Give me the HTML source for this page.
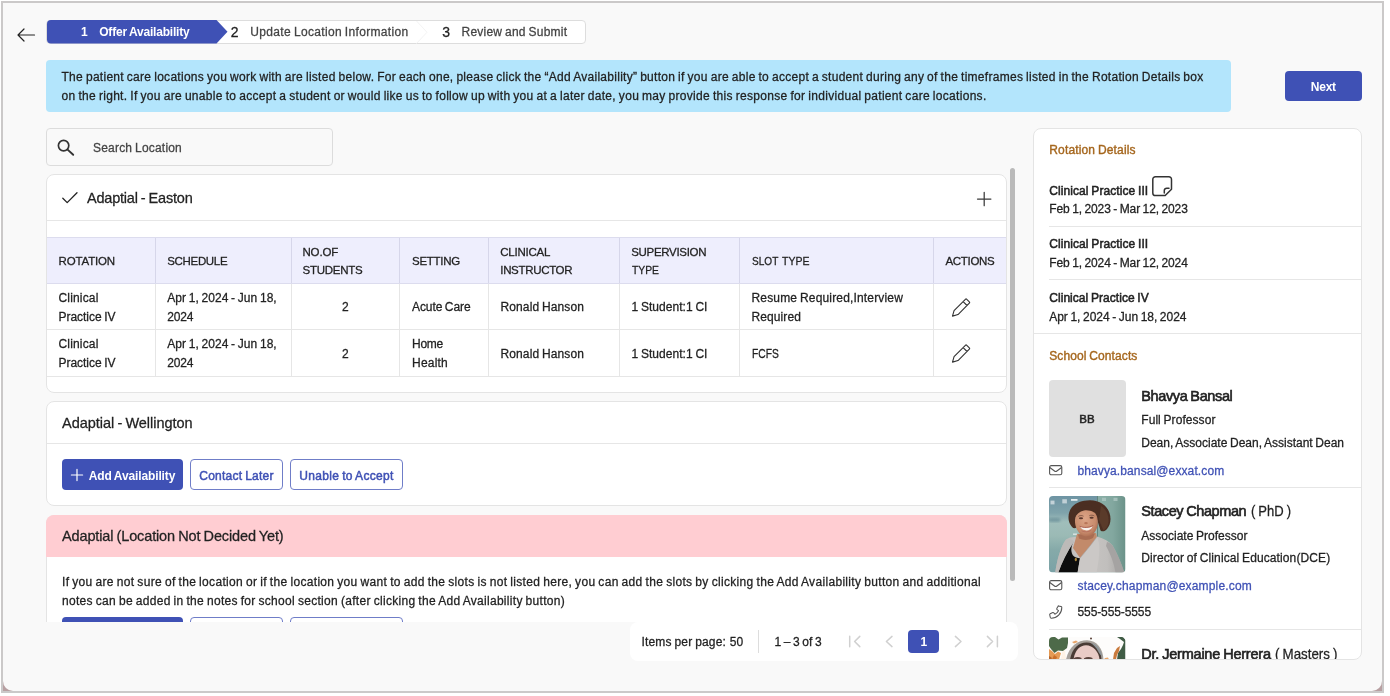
<!DOCTYPE html>
<html lang="en">
<head>
<meta charset="utf-8">
<title>Offer Availability</title>
<style>
html,body{margin:0;padding:0;background:#fff;}
body{width:1390px;height:696px;overflow:hidden;position:relative;font-family:"Liberation Sans",sans-serif;}
#frame{position:absolute;left:1px;top:1px;width:1383px;height:691.5px;box-sizing:border-box;background:#cbc9c9;}
#inner{position:absolute;left:3px;top:3px;width:1379px;height:687.5px;background:#f9f9f9;border-radius:0 0 10px 10px;}
#corner{position:absolute;left:3px;top:670px;width:1379px;height:20.5px;background:#b8a0a2;}
#page{position:absolute;left:0;top:0;width:1390px;height:696px;overflow:hidden;will-change:transform;}
.abs{position:absolute;box-sizing:border-box;}
.t{position:absolute;white-space:nowrap;line-height:normal;word-spacing:-0.7px;}
.t span{display:inline-block;white-space:pre;}
.card{position:absolute;box-sizing:border-box;background:#fff;border:1px solid #e4e4e4;border-radius:8px;}
.hl{position:absolute;height:1px;background:#e6e6e6;}
.vl{position:absolute;width:1px;background:#e6e6e6;}
.btn{position:absolute;box-sizing:border-box;border-radius:4px;}
.btn.p{background:#3f51b5;}
.btn.o{background:#fff;border:1px solid #6f7dc8;}
svg{position:absolute;overflow:visible;}
</style>
</head>
<body>
<div id="frame"></div><div id="corner"></div><div id="inner"></div>
<div id="page">
<svg style="left:17px;top:27.5px" width="18" height="14" viewBox="0 0 18 14"><path d="M17.5 7H1.2M7 1L1 7l6 6" fill="none" stroke="#222" stroke-width="1.2" stroke-linecap="round" stroke-linejoin="round"/></svg><div class="abs" style="left:46px;top:19.5px;width:540px;height:24.5px;background:#fff;border:1px solid #ddd;border-radius:4px;"></div><svg style="left:46.5px;top:20px" width="181" height="23.5" viewBox="0 0 181 23.5"><path d="M4 0H169.5L180.5 11.75L169.5 23.5H4A4 4 0 0 1 0 19.5V4A4 4 0 0 1 4 0Z" fill="#3f51b5"/></svg><svg style="left:416px;top:20.5px" width="12" height="22.5" viewBox="0 0 12 22.5"><path d="M0.5 0L11 11.25L0.5 22.5" fill="none" stroke="#f4f4f4" stroke-width="1"/></svg><div class="abs" style="left:46px;top:60px;width:1184.5px;height:52px;background:#b3e5fc;border-radius:4px;"></div><div class="btn p" style="left:1285px;top:71px;width:77px;height:30px;"></div><div class="abs" style="left:46px;top:128px;width:287px;height:37.5px;background:#f9f9f9;border:1px solid #dcdcdc;border-radius:4px;"></div><svg style="left:56.7px;top:139px" width="18" height="17" viewBox="0 0 18 17"><circle cx="6.6" cy="6.6" r="5.2" fill="none" stroke="#333" stroke-width="1.7"/><path d="M10.6 10.6L16.2 15.8" stroke="#333" stroke-width="1.9" stroke-linecap="round"/></svg><div class="card" style="left:46px;top:174px;width:961px;height:219px;"></div><svg style="left:62px;top:192px" width="16" height="12" viewBox="0 0 16 12"><path d="M0.8 6.2L5.2 10.6L15 0.8" fill="none" stroke="#222" stroke-width="1.3" stroke-linecap="round" stroke-linejoin="round"/></svg><svg style="left:976.5px;top:191.5px" width="14" height="14" viewBox="0 0 14 14"><path d="M7.2 0.3V13.7M0.5 7H13.9" stroke="#3a3a3a" stroke-width="1.25" stroke-linecap="round"/></svg><div class="hl" style="left:47px;top:220px;width:959px;"></div><div class="abs" style="left:47px;top:237px;width:959px;height:47px;background:#eeeefd;border-top:1px solid #dcdcee;border-bottom:1px solid #dcdcee;"></div><div class="vl" style="left:154.75px;top:238px;width:1px;height:45px;background:#d6d6ea;"></div><div class="vl" style="left:154.75px;top:284px;width:1px;height:92px;"></div><div class="vl" style="left:290.5px;top:238px;width:1px;height:45px;background:#d6d6ea;"></div><div class="vl" style="left:290.5px;top:284px;width:1px;height:92px;"></div><div class="vl" style="left:399.0px;top:238px;width:1px;height:45px;background:#d6d6ea;"></div><div class="vl" style="left:399.0px;top:284px;width:1px;height:92px;"></div><div class="vl" style="left:487.75px;top:238px;width:1px;height:45px;background:#d6d6ea;"></div><div class="vl" style="left:487.75px;top:284px;width:1px;height:92px;"></div><div class="vl" style="left:618.5px;top:238px;width:1px;height:45px;background:#d6d6ea;"></div><div class="vl" style="left:618.5px;top:284px;width:1px;height:92px;"></div><div class="vl" style="left:738.75px;top:238px;width:1px;height:45px;background:#d6d6ea;"></div><div class="vl" style="left:738.75px;top:284px;width:1px;height:92px;"></div><div class="vl" style="left:932.75px;top:238px;width:1px;height:45px;background:#d6d6ea;"></div><div class="vl" style="left:932.75px;top:284px;width:1px;height:92px;"></div><div class="hl" style="left:47px;top:329px;width:959px;"></div><div class="hl" style="left:47px;top:376px;width:959px;"></div><svg style="left:952.2px;top:298.8px" width="18" height="18" viewBox="0 0 18 18"><path d="M0.5 17.1L2.06 11.58L13.37 0.27Q14.08 -0.44 14.79 0.27L17.33 2.81Q18.04 3.52 17.33 4.23L6.02 15.54ZM11.11 2.53L15.07 6.49" fill="none" stroke="#333" stroke-width="1.1" stroke-linejoin="round"/></svg><svg style="left:952.2px;top:345.3px" width="18" height="18" viewBox="0 0 18 18"><path d="M0.5 17.1L2.06 11.58L13.37 0.27Q14.08 -0.44 14.79 0.27L17.33 2.81Q18.04 3.52 17.33 4.23L6.02 15.54ZM11.11 2.53L15.07 6.49" fill="none" stroke="#333" stroke-width="1.1" stroke-linejoin="round"/></svg><div class="abs" style="left:1010px;top:168px;width:5px;height:413px;background:#bababa;border-radius:2.5px;"></div><div class="card" style="left:46px;top:401px;width:961px;height:105px;"></div><div class="hl" style="left:47px;top:443px;width:959px;"></div><div class="btn p" style="left:62px;top:459px;width:121px;height:31px;"></div><div class="btn o" style="left:190px;top:459px;width:93px;height:31px;"></div><div class="btn o" style="left:290px;top:459px;width:113px;height:31px;"></div><svg style="left:71.3px;top:469.2px" width="12" height="12" viewBox="0 0 12 12"><path d="M6 0.4V11.6M0.4 6H11.6" stroke="#fff" stroke-width="1.2" stroke-linecap="round"/></svg><div class="abs" style="left:46px;top:515px;width:961px;height:107px;overflow:hidden;"><div class="card" style="left:0;top:0;width:961px;height:160px;"></div><div class="abs" style="left:0;top:0;width:961px;height:41.5px;background:#ffcdd2;border-radius:8px 8px 0 0;"></div><div class="btn p" style="left:16px;top:102px;width:121px;height:31px;"></div><div class="btn o" style="left:144px;top:102px;width:93px;height:31px;"></div><div class="btn o" style="left:244px;top:102px;width:113px;height:31px;"></div></div><div class="abs" style="left:630px;top:622px;width:387.5px;height:38.5px;background:#fff;border-radius:8px;"></div><div class="vl" style="left:758px;top:630px;height:22.5px;background:#ddd;"></div><div class="btn p" style="left:908.3px;top:630px;width:30.4px;height:23px;border-radius:4px;"></div><svg style="left:848px;top:635px" width="14" height="13" viewBox="0 0 14 13"><path d="M1.7 1.2V11.8M11.8 1.4L6.6 6.5L11.8 11.6" fill="none" stroke="#d0d0d0" stroke-width="1.5" stroke-linecap="round" stroke-linejoin="round"/></svg><svg style="left:884px;top:635px" width="10" height="13" viewBox="0 0 10 13"><path d="M8 1.4L2.4 6.5L8 11.6" fill="none" stroke="#d0d0d0" stroke-width="1.5" stroke-linecap="round" stroke-linejoin="round"/></svg><svg style="left:953px;top:635px" width="10" height="13" viewBox="0 0 10 13"><path d="M2.4 1.4L8 6.5L2.4 11.6" fill="none" stroke="#d0d0d0" stroke-width="1.5" stroke-linecap="round" stroke-linejoin="round"/></svg><svg style="left:985px;top:635px" width="14" height="13" viewBox="0 0 14 13"><path d="M12.4 1.2V11.8M2.4 1.4L7.6 6.5L2.4 11.6" fill="none" stroke="#d0d0d0" stroke-width="1.5" stroke-linecap="round" stroke-linejoin="round"/></svg><div class="card" style="left:1033px;top:128px;width:328.5px;height:532px;"></div><svg style="left:1151.5px;top:175.9px" width="20.3" height="20.3" viewBox="0 0 20.3 20.3"><path d="M3.4 0.8H16.9A2.6 2.6 0 0 1 19.5 3.4V13.2L13.2 19.5H3.4A2.6 2.6 0 0 1 0.8 16.9V3.4A2.6 2.6 0 0 1 3.4 0.8ZM12.3 16.9V14.6A2.4 2.4 0 0 1 14.7 12.2H17" fill="none" stroke="#333" stroke-width="1.5" stroke-linejoin="round" stroke-linecap="round"/></svg><div class="hl" style="left:1049px;top:226px;width:312px;"></div><div class="hl" style="left:1049px;top:279px;width:312px;"></div><div class="hl" style="left:1034px;top:333px;width:327px;"></div><div class="abs" style="left:1049px;top:380px;width:76.5px;height:76.5px;background:#e0e0e0;border-radius:4px;"></div><svg style="left:1049.1px;top:464.7px" width="13.4" height="10.4" viewBox="0 0 13.4 10.4"><rect x="0.6" y="0.6" width="12.2" height="9.2" rx="1.6" fill="none" stroke="#555" stroke-width="1.1"/><path d="M0.8 2.5L5.5 6a2 2 0 0 0 2.4 0L12.6 2.5" fill="none" stroke="#555" stroke-width="1.1"/></svg><div class="hl" style="left:1049px;top:486.5px;width:312px;"></div><svg style="left:1049px;top:495.5px" width="76.5" height="76.5" viewBox="0 0 76.5 76.5">
<defs>
<clipPath id="cp2"><rect x="0" y="0" width="76.5" height="76.5" rx="4"/></clipPath>
<linearGradient id="bgL" x1="0" y1="0" x2="0" y2="1"><stop offset="0" stop-color="#6e94a3"/><stop offset="0.22" stop-color="#7fa3ab"/><stop offset="0.34" stop-color="#a0bebb"/><stop offset="0.52" stop-color="#9bbab5"/><stop offset="0.7" stop-color="#86aaa9"/><stop offset="1" stop-color="#7aa2a6"/></linearGradient>
<linearGradient id="bgR" x1="0" y1="0" x2="1" y2="0"><stop offset="0" stop-color="#8bafa7"/><stop offset="0.55" stop-color="#82a79f"/><stop offset="1" stop-color="#6b9289"/></linearGradient>
<linearGradient id="jk" x1="0" y1="0" x2="1" y2="0"><stop offset="0" stop-color="#b3b1af"/><stop offset="0.35" stop-color="#c9c6c4"/><stop offset="0.75" stop-color="#c1bfbd"/><stop offset="1" stop-color="#a3a1a0"/></linearGradient>
<radialGradient id="fc" cx="0.45" cy="0.4" r="0.65"><stop offset="0" stop-color="#dca487"/><stop offset="0.7" stop-color="#c88c6d"/><stop offset="1" stop-color="#a9694e"/></radialGradient>
<filter id="bl2" x="-10%" y="-10%" width="120%" height="120%"><feGaussianBlur stdDeviation="0.75"/></filter>
<filter id="bl2b" x="-20%" y="-20%" width="140%" height="140%"><feGaussianBlur stdDeviation="1.6"/></filter>
</defs>
<g clip-path="url(#cp2)">
<rect width="48.5" height="76.5" fill="url(#bgL)"/>
<rect x="48.5" width="28" height="76.5" fill="url(#bgR)"/>
<rect x="0" y="22.5" width="11" height="3" fill="#5c8490" opacity="0.8" filter="url(#bl2b)"/>
<rect x="48.1" y="0" width="0.8" height="42" fill="#527870"/>
<g filter="url(#bl2)">
<rect x="1.5" y="4.6" width="4" height="3.8" fill="#c3d2d8"/><rect x="13.3" y="3.2" width="4.6" height="4.2" fill="#c0d0d6"/><rect x="22" y="3" width="6.5" height="1.8" fill="#e9eff1"/><rect x="53" y="1.8" width="4" height="3.2" fill="#a5c0bb"/><rect x="64.5" y="1.8" width="4" height="3.2" fill="#a5c0bb"/>
<rect x="24" y="37.5" width="4" height="1.4" fill="#dbe6e6"/>
<!-- jacket -->
<path d="M6.3 76.5C8 64 11.5 51 17 43.5C21 40.5 26 40.5 30 41.5L48 40.5C55 42.5 60.5 45.5 63.6 49.5C68 57 72 66 75.3 76.5Z" fill="url(#jk)"/>
<path d="M57 50C61 57 65 67 66.5 76.5H75.3C72 66 68 57 63.6 49.5C62 47.5 60 46.5 58 46Z" fill="#a5a3a2"/>
<!-- neck / chest -->
<path d="M28 38L47 37L48 41.5L40.5 51L31 62L24 52Z" fill="#c28a6b"/>
<path d="M29 38.5L46 37.5L44 42C40 44.5 34 44.5 30 42.5Z" fill="#a96d52"/>
<!-- black top -->
<path d="M25 45.3C22 50 21.5 55 23.8 59.2C26 61.5 28.5 62 31 62.2L28.6 76.5H9.3C13 66 18 56 25 45.3Z" fill="#111"/>
<!-- right lapel -->
<path d="M31 62.2L41 50L48 40.8C51.5 47 51 60 47.5 76.5H28.6Z" fill="#cbc8c6"/>
<path d="M31 62.2L41 50L47.5 41.5" fill="none" stroke="#a19f9d" stroke-width="0.6"/>
<path d="M17 43.5C20 43 23 43.6 25 45.3C18 56 13 66 9.3 76.5H6.3C8 64 11.5 51 17 43.5Z" fill="#bdbab8"/>
<!-- hair -->
<path d="M40.7 4.2C50 4 58 9 60.5 17C62.5 23 61.5 29 58 33C56 35.5 53.5 36 51.5 34.5L47 20L30 18L27.5 31.5C25 33.5 22.5 31 21 28C18.5 23 19 16 23 11C27 6.5 33 4.3 40.7 4.2Z" fill="#4b2f23"/>
<path d="M52 10C57 13 60 19 59.5 26C59 30 57 33 54.5 34.5L50 24Z" fill="#5a3a2b"/>
<!-- face -->
<ellipse cx="37.4" cy="25.8" rx="11.4" ry="14.6" fill="url(#fc)" transform="rotate(-4 37.4 25.8)"/>
<path d="M25.5 22C27 13 33 9 40 9.5C46 10 50 14 50.5 21C47 16.5 41 13.5 35 14.5C30.5 15.5 27.5 18.5 25.5 22Z" fill="#4b2f23"/>
<ellipse cx="32" cy="22.2" rx="2.1" ry="0.95" fill="#5a382d"/><ellipse cx="42.6" cy="21.8" rx="2.1" ry="0.95" fill="#5a382d"/>
<path d="M29.3 20.4C30.8 19.3 33 19.3 34.6 20.2" fill="none" stroke="#5a382d" stroke-width="0.6"/><path d="M40.2 19.8C41.8 18.9 44 19 45.4 20" fill="none" stroke="#5a382d" stroke-width="0.6"/>
<ellipse cx="37" cy="27.2" rx="1.8" ry="1.1" fill="#b87658"/>
<path d="M31.2 30.6C34.5 32.6 40 32.5 43.6 30C42.4 35.6 33.4 36 31.2 30.6Z" fill="#f7f1ee"/>
<path d="M30.6 30.2C34.5 32 40 31.8 44.2 29.5" fill="none" stroke="#a4574b" stroke-width="0.8"/>
<path d="M32.5 34.8C35.5 36.4 39.5 36.2 42.3 34.2" fill="none" stroke="#b0675a" stroke-width="0.7"/>
<ellipse cx="26.8" cy="63.5" rx="1.1" ry="1.7" fill="#b08a3a"/>
</g>
</g></svg><svg style="left:1049.1px;top:580.3px" width="13.4" height="10.4" viewBox="0 0 13.4 10.4"><rect x="0.6" y="0.6" width="12.2" height="9.2" rx="1.6" fill="none" stroke="#555" stroke-width="1.1"/><path d="M0.8 2.5L5.5 6a2 2 0 0 0 2.4 0L12.6 2.5" fill="none" stroke="#555" stroke-width="1.1"/></svg><svg style="left:1049px;top:605px" width="14" height="14" viewBox="0 0 14 14"><path d="M9.2 0.9l2.9 0.7a0.9 0.9 0 0 1 0.7 0.9C12.8 8.6 8 13.2 2.2 13.2a0.9 0.9 0 0 1-0.9-0.7L0.7 9.7a0.9 0.9 0 0 1 0.5-1l2.6-1.1a0.9 0.9 0 0 1 1 0.3l1.1 1.4a8 8 0 0 0 3.6-3.6L8.1 4.6a0.9 0.9 0 0 1-0.3-1L8.9 1.4a0.9 0.9 0 0 1 1-0.5Z" fill="none" stroke="#555" stroke-width="1.05" stroke-linejoin="round"/></svg><div class="hl" style="left:1049px;top:628.5px;width:312px;"></div><svg style="left:1049px;top:637px" width="76.5" height="22.5" viewBox="0 0 76.5 22.5">
<defs>
<clipPath id="cp3"><path d="M4 0H72.5A4 4 0 0 1 76.5 4V22.5H0V4A4 4 0 0 1 4 0Z"/></clipPath>
<filter id="bl3" x="-10%" y="-10%" width="120%" height="120%"><feGaussianBlur stdDeviation="0.55"/></filter>
</defs>
<g clip-path="url(#cp3)">
<rect width="76.5" height="22.5" fill="#fdfcfb"/>
<g filter="url(#bl3)">
<path d="M0 0H6L9.5 2.5L13 0.5H19V6L18 11L14 14L9 13.5L5.5 16L2 12L0 9Z" fill="#4d6a49"/>
<path d="M0 12L3 14L6 17L9 14.5L12 16L10 22.5H0Z" fill="#e49a55"/>
<path d="M3 22.5L5 18L8 20L7 22.5Z" fill="#c96d2b"/><path d="M0 19L2.5 20.5L3 22.5H0Z" fill="#b5642a"/>
<path d="M13 15L16 13L17 22.5H12Z" fill="#fff3e6"/>
<path d="M23 5L27 3.5L29 5L25 6.5Z" fill="#e9a56a"/>
<path d="M68 0H74L76.5 3V22.5H68L69 16L72 12L74 8L75 5L71 2Z" fill="#405c45"/>
<path d="M65 16L68 11L71 9L70 14L68 18L67 22.5H64Z" fill="#c97a3c"/>
<path d="M56 21L59 20.5L60 22.5H55Z" fill="#e9a56a"/>
<circle cx="42" cy="1.6" r="1" fill="#5a4038"/>
<!-- hair & face -->
<path d="M17 22.5C20 9 29 3.2 38 3.2C48 3.2 54 12 54.5 22.5Z" fill="#a8a29c"/>
<path d="M21 22.5C23 11 30 5.5 37.5 5.5C46 5.5 52 13 52.5 22.5Z" fill="#4a3a34"/>
<path d="M24.5 22.5C26 13 31 8.3 37 8.3C44 8.3 50 15 50.5 22.5Z" fill="#e9cbc6"/>
<path d="M42 5.8C48 7 52.5 13 53.5 20L50 16C48 11 45 9 42 5.8Z" fill="#8f969a"/>
<path d="M24.5 21.2C27 19.6 30.5 19.6 32.5 21V22.5H24.5Z" fill="#5a433d"/><path d="M35 21.2C37.5 19.6 41 19.6 43.5 21V22.5H35Z" fill="#5a433d"/>
</g></g></svg>
<div class="t" id="t0" style="top:25.20px;font-size:12px;color:#fff;font-weight:700;letter-spacing:-0.888px;left:80.90px;"><span>1</span></div>
<div class="t" id="t1" style="top:25.20px;font-size:12px;color:#fff;font-weight:700;letter-spacing:-0.193px;left:99.20px;"><span>Offer Availability</span></div>
<div class="t" id="t2" style="top:24.00px;font-size:14px;color:#222;-webkit-text-stroke:0.26px #222;letter-spacing:-0.397px;left:230.80px;"><span>2</span></div>
<div class="t" id="t3" style="top:25.20px;font-size:12px;color:#444;-webkit-text-stroke:0.26px #444;letter-spacing:0.327px;left:250.30px;"><span>Update Location Information</span></div>
<div class="t" id="t4" style="top:24.00px;font-size:14px;color:#222;-webkit-text-stroke:0.26px #222;letter-spacing:-0.797px;left:442.20px;"><span>3</span></div>
<div class="t" id="t5" style="top:25.20px;font-size:12px;color:#444;-webkit-text-stroke:0.26px #444;letter-spacing:0.224px;left:461.50px;"><span>Review and Submit</span></div>
<div class="t" id="t6" style="top:70.40px;font-size:12px;color:#222;-webkit-text-stroke:0.26px #222;letter-spacing:0.280px;left:61.50px;"><span>The patient care locations you work with are listed below. For each one, please click the “Add Availability” button if you are able to accept a student during any of the timeframes listed in the Rotation Details box</span></div>
<div class="t" id="t7" style="top:89.40px;font-size:12px;color:#222;-webkit-text-stroke:0.26px #222;letter-spacing:0.301px;left:61.50px;"><span>on the right. If you are unable to accept a student or would like us to follow up with you at a later date, you may provide this response for individual patient care locations.</span></div>
<div class="t" id="t8" style="top:79.80px;font-size:12px;color:#fff;font-weight:700;letter-spacing:-0.254px;left:1023.30px;width:600px;text-align:center;"><span>Next</span></div>
<div class="t" id="t9" style="top:140.50px;font-size:12px;color:#444;-webkit-text-stroke:0.26px #444;letter-spacing:0.198px;left:93.00px;"><span>Search Location</span></div>
<div class="t" id="t10" style="top:189.80px;font-size:14.5px;color:#222;-webkit-text-stroke:0.26px #222;letter-spacing:-0.208px;left:87.00px;"><span>Adaptial - Easton</span></div>
<div class="t" id="t11" style="top:254.90px;font-size:11.5px;color:#222;-webkit-text-stroke:0.26px #222;letter-spacing:-0.152px;left:58.50px;"><span>ROTATION</span></div>
<div class="t" id="t12" style="top:254.90px;font-size:11.5px;color:#222;-webkit-text-stroke:0.26px #222;letter-spacing:-0.330px;left:167.25px;"><span>SCHEDULE</span></div>
<div class="t" id="t13" style="top:245.60px;font-size:11.5px;color:#222;-webkit-text-stroke:0.26px #222;letter-spacing:-0.184px;left:302.50px;"><span>NO.OF</span></div>
<div class="t" id="t14" style="top:264.40px;font-size:11.5px;color:#222;-webkit-text-stroke:0.26px #222;letter-spacing:-0.248px;left:302.50px;"><span>STUDENTS</span></div>
<div class="t" id="t15" style="top:254.90px;font-size:11.5px;color:#222;-webkit-text-stroke:0.26px #222;letter-spacing:-0.263px;left:412.00px;"><span>SETTING</span></div>
<div class="t" id="t16" style="top:245.60px;font-size:11.5px;color:#222;-webkit-text-stroke:0.26px #222;letter-spacing:-0.223px;left:500.25px;"><span>CLINICAL</span></div>
<div class="t" id="t17" style="top:264.40px;font-size:11.5px;color:#222;-webkit-text-stroke:0.26px #222;letter-spacing:-0.319px;left:500.25px;"><span>INSTRUCTOR</span></div>
<div class="t" id="t18" style="top:245.60px;font-size:11.5px;color:#222;-webkit-text-stroke:0.26px #222;letter-spacing:-0.310px;left:631.25px;"><span>SUPERVISION</span></div>
<div class="t" id="t19" style="top:264.40px;font-size:11.5px;color:#222;-webkit-text-stroke:0.26px #222;left:632.00px;"><span style="transform:scaleX(0.8986);transform-origin:left center;">TYPE</span></div>
<div class="t" id="t20" style="top:254.90px;font-size:11.5px;color:#222;-webkit-text-stroke:0.26px #222;left:751.70px;"><span style="transform:scaleX(0.8753);transform-origin:left center;">SLOT</span></div>
<div class="t" id="t21" style="top:254.90px;font-size:11.5px;color:#222;-webkit-text-stroke:0.26px #222;left:782.30px;"><span style="transform:scaleX(0.9152);transform-origin:left center;">TYPE</span></div>
<div class="t" id="t22" style="top:254.90px;font-size:11.5px;color:#222;-webkit-text-stroke:0.26px #222;letter-spacing:-0.304px;left:945.50px;"><span>ACTIONS</span></div>
<div class="t" id="t23" style="top:291.00px;font-size:12px;color:#222;-webkit-text-stroke:0.26px #222;letter-spacing:0.164px;left:58.50px;"><span>Clinical</span></div>
<div class="t" id="t24" style="top:309.50px;font-size:12px;color:#222;-webkit-text-stroke:0.26px #222;letter-spacing:-0.030px;left:58.50px;"><span>Practice IV</span></div>
<div class="t" id="t25" style="top:291.00px;font-size:12px;color:#222;-webkit-text-stroke:0.26px #222;letter-spacing:0.044px;left:167.25px;"><span>Apr 1, 2024 - Jun 18,</span></div>
<div class="t" id="t26" style="top:309.50px;font-size:12px;color:#222;-webkit-text-stroke:0.26px #222;letter-spacing:-0.176px;left:167.25px;"><span>2024</span></div>
<div class="t" id="t27" style="top:300.20px;font-size:12px;color:#222;-webkit-text-stroke:0.26px #222;letter-spacing:-0.688px;left:45.00px;width:600px;text-align:center;"><span>2</span></div>
<div class="t" id="t28" style="top:300.20px;font-size:12px;color:#222;-webkit-text-stroke:0.26px #222;letter-spacing:-0.084px;left:412.00px;"><span>Acute Care</span></div>
<div class="t" id="t29" style="top:291.00px;font-size:12px;color:#222;-webkit-text-stroke:0.26px #222;letter-spacing:0.165px;left:751.50px;"><span>Resume Required,Interview</span></div>
<div class="t" id="t30" style="top:309.50px;font-size:12px;color:#222;-webkit-text-stroke:0.26px #222;letter-spacing:0.100px;left:751.50px;"><span>Required</span></div>
<div class="t" id="t31" style="top:300.20px;font-size:12px;color:#222;-webkit-text-stroke:0.26px #222;letter-spacing:0.113px;left:500.50px;"><span>Ronald Hanson</span></div>
<div class="t" id="t32" style="top:300.20px;font-size:12px;color:#222;-webkit-text-stroke:0.26px #222;letter-spacing:0.048px;left:631.50px;"><span>1 Student:1 CI</span></div>
<div class="t" id="t33" style="top:336.75px;font-size:12px;color:#222;-webkit-text-stroke:0.26px #222;letter-spacing:0.164px;left:58.50px;"><span>Clinical</span></div>
<div class="t" id="t34" style="top:355.50px;font-size:12px;color:#222;-webkit-text-stroke:0.26px #222;letter-spacing:-0.030px;left:58.50px;"><span>Practice IV</span></div>
<div class="t" id="t35" style="top:336.75px;font-size:12px;color:#222;-webkit-text-stroke:0.26px #222;letter-spacing:0.044px;left:167.25px;"><span>Apr 1, 2024 - Jun 18,</span></div>
<div class="t" id="t36" style="top:355.50px;font-size:12px;color:#222;-webkit-text-stroke:0.26px #222;letter-spacing:-0.176px;left:167.25px;"><span>2024</span></div>
<div class="t" id="t37" style="top:346.50px;font-size:12px;color:#222;-webkit-text-stroke:0.26px #222;letter-spacing:-0.688px;left:45.00px;width:600px;text-align:center;"><span>2</span></div>
<div class="t" id="t38" style="top:336.75px;font-size:12px;color:#222;-webkit-text-stroke:0.26px #222;letter-spacing:-0.254px;left:412.00px;"><span>Home</span></div>
<div class="t" id="t39" style="top:355.50px;font-size:12px;color:#222;-webkit-text-stroke:0.26px #222;letter-spacing:0.219px;left:412.00px;"><span>Health</span></div>
<div class="t" id="t40" style="top:346.50px;font-size:12px;color:#222;-webkit-text-stroke:0.26px #222;left:751.50px;"><span style="transform:scaleX(0.8550);transform-origin:left center;">FCFS</span></div>
<div class="t" id="t41" style="top:346.50px;font-size:12px;color:#222;-webkit-text-stroke:0.26px #222;letter-spacing:0.113px;left:500.50px;"><span>Ronald Hanson</span></div>
<div class="t" id="t42" style="top:346.50px;font-size:12px;color:#222;-webkit-text-stroke:0.26px #222;letter-spacing:0.048px;left:631.50px;"><span>1 Student:1 CI</span></div>
<div class="t" id="t43" style="top:414.70px;font-size:14.5px;color:#222;-webkit-text-stroke:0.26px #222;letter-spacing:-0.039px;left:62.00px;"><span>Adaptial - Wellington</span></div>
<div class="t" id="t44" style="top:468.50px;font-size:12px;color:#fff;font-weight:700;letter-spacing:-0.121px;left:88.75px;"><span>Add Availability</span></div>
<div class="t" id="t45" style="top:468.50px;font-size:12px;color:#3f51b5;-webkit-text-stroke:0.48px #3f51b5;letter-spacing:0.243px;left:199.25px;"><span>Contact Later</span></div>
<div class="t" id="t46" style="top:468.50px;font-size:12px;color:#3f51b5;-webkit-text-stroke:0.48px #3f51b5;letter-spacing:0.323px;left:299.25px;"><span>Unable to Accept</span></div>
<div class="t" id="t47" style="top:528.00px;font-size:14.5px;color:#222;-webkit-text-stroke:0.26px #222;letter-spacing:-0.133px;left:62.00px;"><span>Adaptial (Location Not Decided Yet)</span></div>
<div class="t" id="t48" style="top:575.00px;font-size:12px;color:#222;-webkit-text-stroke:0.26px #222;letter-spacing:0.319px;left:62.00px;"><span>If you are not sure of the location or if the location you want to add the slots is not listed here, you can add the slots by clicking the Add Availability button and additional</span></div>
<div class="t" id="t49" style="top:593.50px;font-size:12px;color:#222;-webkit-text-stroke:0.26px #222;letter-spacing:0.296px;left:62.00px;"><span>notes can be added in the notes for school section (after clicking the Add Availability button)</span></div>
<div class="t" id="t50" style="top:635.00px;font-size:12px;color:#222;-webkit-text-stroke:0.26px #222;letter-spacing:0.168px;left:641.50px;"><span>Items per page:</span></div>
<div class="t" id="t51" style="top:635.00px;font-size:12px;color:#222;-webkit-text-stroke:0.26px #222;letter-spacing:-0.080px;left:729.80px;"><span>50</span></div>
<div class="t" id="t52" style="top:635.00px;font-size:12px;color:#222;-webkit-text-stroke:0.26px #222;letter-spacing:-0.005px;left:774.40px;"><span>1 – 3 of 3</span></div>
<div class="t" id="t53" style="top:634.80px;font-size:12px;color:#fff;font-weight:700;letter-spacing:-0.888px;left:623.50px;width:600px;text-align:center;"><span>1</span></div>
<div class="t" id="t54" style="top:142.80px;font-size:12px;color:#a5661d;-webkit-text-stroke:0.38px #a5661d;letter-spacing:0.155px;left:1049.25px;"><span>Rotation Details</span></div>
<div class="t" id="t55" style="top:183.50px;font-size:12px;color:#222;-webkit-text-stroke:0.5px #222;letter-spacing:0.081px;left:1049.25px;"><span>Clinical Practice III</span></div>
<div class="t" id="t56" style="top:202.20px;font-size:12px;color:#222;-webkit-text-stroke:0.26px #222;letter-spacing:-0.105px;left:1049.25px;"><span>Feb 1, 2023 - Mar 12, 2023</span></div>
<div class="t" id="t57" style="top:237.20px;font-size:12px;color:#222;-webkit-text-stroke:0.5px #222;letter-spacing:0.081px;left:1049.25px;"><span>Clinical Practice III</span></div>
<div class="t" id="t58" style="top:256.00px;font-size:12px;color:#222;-webkit-text-stroke:0.26px #222;letter-spacing:-0.105px;left:1049.25px;"><span>Feb 1, 2024 - Mar 12, 2024</span></div>
<div class="t" id="t59" style="top:291.20px;font-size:12px;color:#222;-webkit-text-stroke:0.5px #222;letter-spacing:0.043px;left:1049.25px;"><span>Clinical Practice IV</span></div>
<div class="t" id="t60" style="top:310.20px;font-size:12px;color:#222;-webkit-text-stroke:0.26px #222;letter-spacing:-0.027px;left:1049.25px;"><span>Apr 1, 2024 - Jun 18, 2024</span></div>
<div class="t" id="t61" style="top:348.80px;font-size:12px;color:#a5661d;-webkit-text-stroke:0.38px #a5661d;letter-spacing:0.101px;left:1049.25px;"><span>School Contacts</span></div>
<div class="t" id="t62" style="top:412.50px;font-size:11.5px;color:#222;-webkit-text-stroke:0.5px #222;letter-spacing:0.078px;left:787.00px;width:600px;text-align:center;"><span>BB</span></div>
<div class="t" id="t63" style="top:388.00px;font-size:14.5px;color:#222;-webkit-text-stroke:0.6px #222;letter-spacing:-0.372px;left:1141.25px;"><span>Bhavya Bansal</span></div>
<div class="t" id="t64" style="top:412.80px;font-size:12px;color:#222;-webkit-text-stroke:0.26px #222;letter-spacing:0.062px;left:1141.25px;"><span>Full Professor</span></div>
<div class="t" id="t65" style="top:435.80px;font-size:12px;color:#222;-webkit-text-stroke:0.26px #222;letter-spacing:0.004px;left:1141.25px;"><span>Dean, Associate Dean, Assistant Dean</span></div>
<div class="t" id="t66" style="top:463.70px;font-size:12px;color:#3f51b5;-webkit-text-stroke:0.26px #3f51b5;letter-spacing:0.110px;left:1077.50px;"><span>bhavya.bansal@exxat.com</span></div>
<div class="t" id="t67" style="top:502.90px;font-size:14.5px;color:#222;-webkit-text-stroke:0.6px #222;letter-spacing:-0.395px;left:1141.25px;"><span>Stacey Chapman</span></div>
<div class="t" id="t68" style="top:502.90px;font-size:14.5px;color:#222;-webkit-text-stroke:0.26px #222;left:1250.50px;"><span style="transform:scaleX(0.8982);transform-origin:left center;">( PhD )</span></div>
<div class="t" id="t69" style="top:528.50px;font-size:12px;color:#222;-webkit-text-stroke:0.26px #222;letter-spacing:0.010px;left:1141.25px;"><span>Associate Professor</span></div>
<div class="t" id="t70" style="top:550.80px;font-size:12px;color:#222;-webkit-text-stroke:0.26px #222;letter-spacing:0.106px;left:1141.25px;"><span>Director of Clinical Education(DCE)</span></div>
<div class="t" id="t71" style="top:579.00px;font-size:12px;color:#3f51b5;-webkit-text-stroke:0.26px #3f51b5;letter-spacing:0.171px;left:1077.50px;"><span>stacey.chapman@example.com</span></div>
<div class="t" id="t72" style="top:605.30px;font-size:12px;color:#222;-webkit-text-stroke:0.26px #222;letter-spacing:-0.103px;left:1077.50px;"><span>555-555-5555</span></div>
<div class="t" id="t73" style="top:645.80px;font-size:14.5px;color:#222;-webkit-text-stroke:0.6px #222;letter-spacing:-0.224px;left:1141.25px;"><span>Dr. Jermaine Herrera</span></div>
<div class="t" id="t74" style="top:645.80px;font-size:14.5px;color:#222;-webkit-text-stroke:0.26px #222;left:1275.00px;"><span style="transform:scaleX(0.9206);transform-origin:left center;">( Masters )</span></div>
<div class="abs" style="left:1041px;top:659px;width:312.5px;height:14px;background:#f9f9f9;border-top:1px solid #e4e4e4;"></div>
</div>
</body>
</html>
